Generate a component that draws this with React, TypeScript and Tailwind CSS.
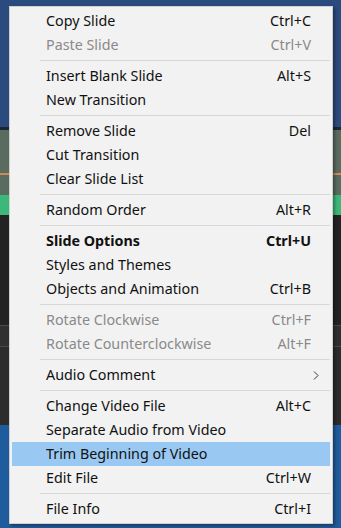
import React from "react";

type Item =
  | { sep: true }
  | {
      sep?: false;
      label: string;
      shortcut?: string;
      disabled?: boolean;
      bold?: boolean;
      active?: boolean;
      submenu?: boolean;
    };

const items: Item[] = [
  { label: "Copy Slide", shortcut: "Ctrl+C" },
  { label: "Paste Slide", shortcut: "Ctrl+V", disabled: true },
  { sep: true },
  { label: "Insert Blank Slide", shortcut: "Alt+S" },
  { label: "New Transition" },
  { sep: true },
  { label: "Remove Slide", shortcut: "Del" },
  { label: "Cut Transition" },
  { label: "Clear Slide List" },
  { sep: true },
  { label: "Random Order", shortcut: "Alt+R" },
  { sep: true },
  { label: "Slide Options", shortcut: "Ctrl+U", bold: true },
  { label: "Styles and Themes" },
  { label: "Objects and Animation", shortcut: "Ctrl+B" },
  { sep: true },
  { label: "Rotate Clockwise", shortcut: "Ctrl+F", disabled: true },
  { label: "Rotate Counterclockwise", shortcut: "Alt+F", disabled: true },
  { sep: true },
  { label: "Audio Comment", submenu: true },
  { sep: true },
  { label: "Change Video File", shortcut: "Alt+C" },
  { label: "Separate Audio from Video" },
  { label: "Trim Beginning of Video", active: true },
  { label: "Edit File", shortcut: "Ctrl+W" },
  { sep: true },
  { label: "File Info", shortcut: "Ctrl+I" },
];

function Backdrop() {
  return (
    <div className="flex flex-col h-[528px] w-full">
      <div className="h-[127px] bg-[#2b4a7d]" />
      <div className="h-[3px] bg-[#1c2733]" />
      <div className="h-[43px] bg-[#5a6c60]" />
      <div className="h-[2px] bg-[#d08a55]" />
      <div className="h-[20px] bg-[#5a6c60]" />
      <div className="h-[20px] bg-[#3db87b]" />
      <div className="h-[110px] bg-[#232323]" />
      <div className="h-[1px] bg-[#4a4a4a]" />
      <div className="h-[20px] bg-[#303030]" />
      <div className="h-[1px] bg-[#4a4a4a]" />
      <div className="h-[78px] bg-[#2c2c2c]" />
      <div className="flex-1 bg-[#1f5c9e]" />
    </div>
  );
}

function Row({ item }: { item: Exclude<Item, { sep: true }> }) {
  const color = item.disabled ? "text-[#8a8a8a]" : "text-[#111]";
  return (
    <div
      className={`flex items-center h-[24px] mx-[2px] pt-px pl-[34px] pr-[19px] ${
        item.active ? "bg-[#99c9f2]" : ""
      } ${color} ${item.bold ? "font-bold" : ""}`}
    >
      <span className="flex-1 whitespace-nowrap">{item.label}</span>
      {item.shortcut && <span className="whitespace-nowrap">{item.shortcut}</span>}
      {item.submenu && (
        <svg width="6" height="9" viewBox="0 0 6 9" className="mr-[-8px]">
          <path d="M1 0.5 L5 4.5 L1 8.5" fill="none" stroke="#333" strokeWidth="1" />
        </svg>
      )}
    </div>
  );
}

export default function App() {
  return (
    <div
      className="relative w-[341px] h-[528px] overflow-hidden"
      style={{ fontFamily: '"Noto Sans", "Open Sans", sans-serif' }}
    >
      <Backdrop />
      <div className="absolute left-[9px] top-[6px] w-[324px] bg-[#f2f2f2] border border-[#cfcfcf] py-[2px] text-[14.3px] leading-none shadow-[2px_2px_3px_rgba(0,0,0,0.35)]">
        {items.map((item, i) =>
          item.sep ? (
            <div key={i} className="h-[7px] flex items-center pl-[30px] pr-[2px]">
              <div className="h-px w-full bg-[#d7d7d7]" />
            </div>
          ) : (
            <Row key={i} item={item} />
          )
        )}
      </div>
    </div>
  );
}
